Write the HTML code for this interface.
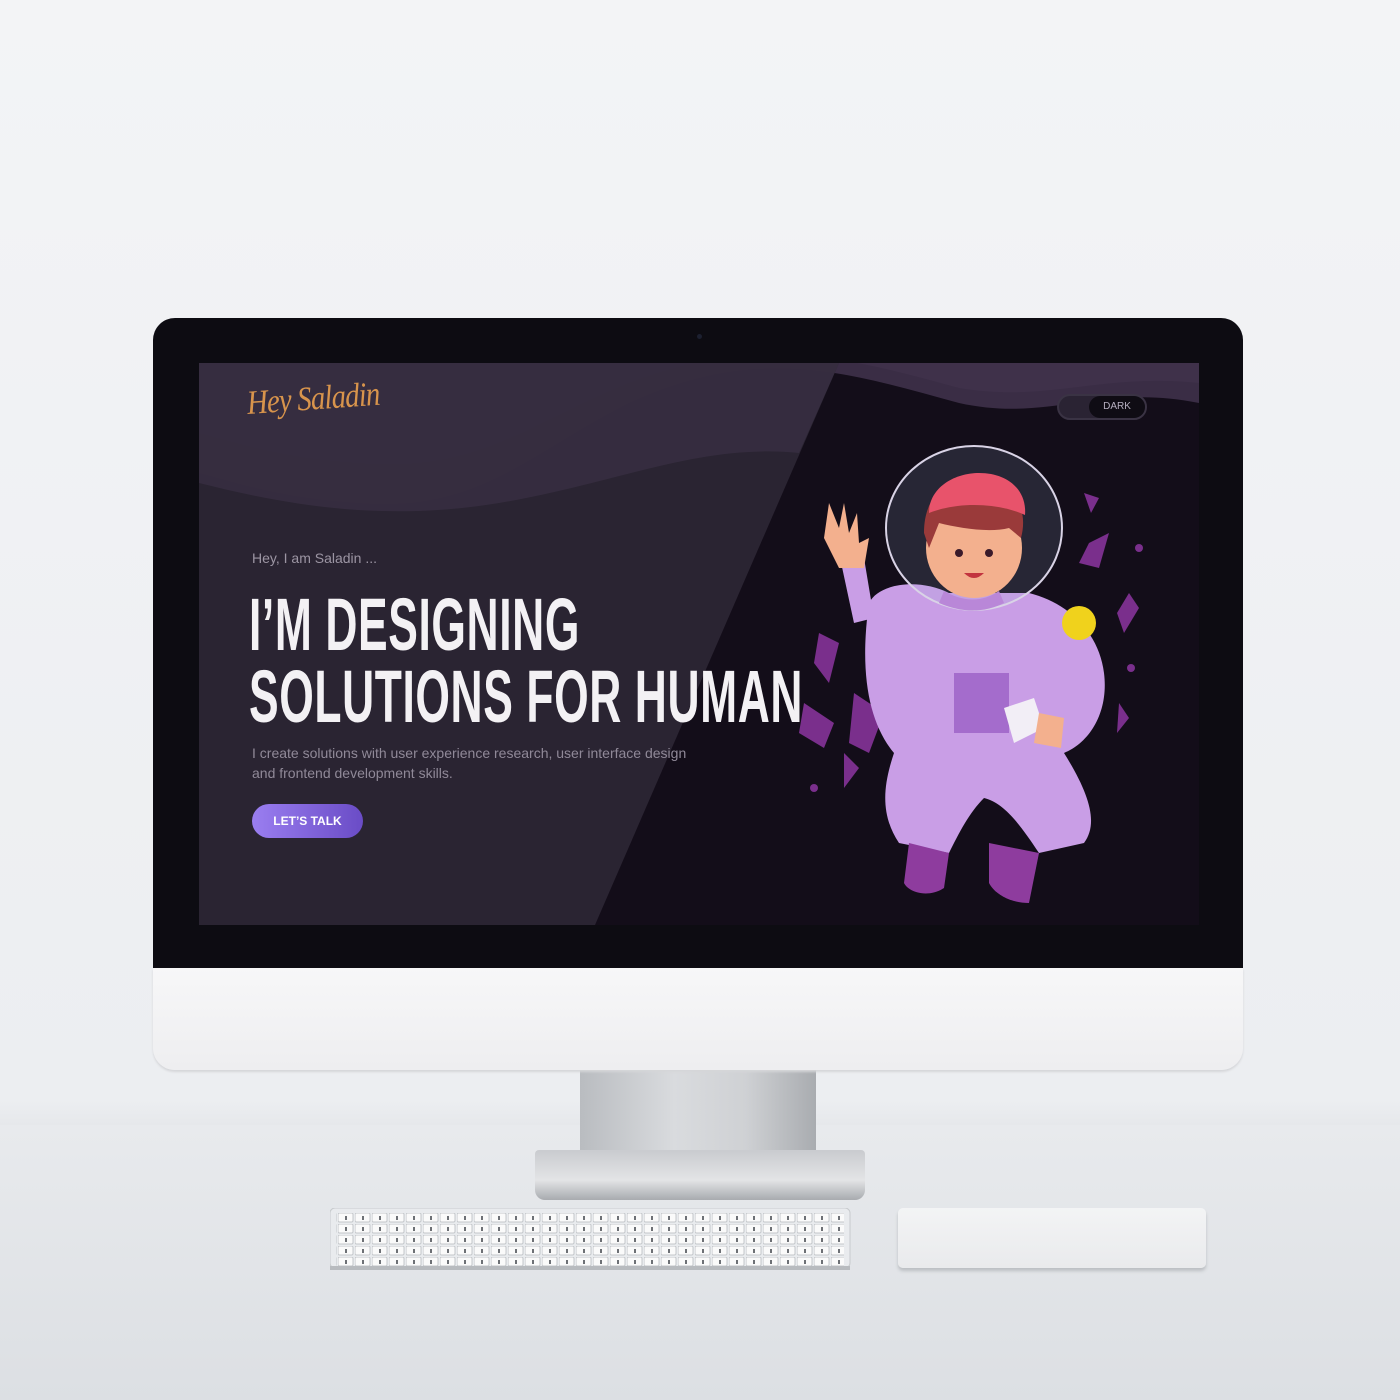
<!DOCTYPE html>
<html><head><meta charset="utf-8"><style>
*{margin:0;padding:0;box-sizing:border-box}
body{width:1400px;height:1400px;overflow:hidden;position:relative;background:linear-gradient(#f3f4f6 0,#eceef1 1100px,#e6e8eb 1125px,#dfe2e6 1400px);font-family:"Liberation Sans",sans-serif}
.abs{position:absolute}
</style></head><body>
<div class="abs" style="left:0;top:1125px;width:1400px;height:275px;background:linear-gradient(#e8eaed,#dcdfe3)"></div>
<div class="abs" style="left:580px;top:1066px;width:236px;height:110px;background:linear-gradient(90deg,#b9bcc0,#d9dbde 40%,#cfd1d4 70%,#a9acb0)"></div>
<div class="abs" style="left:535px;top:1150px;width:330px;height:50px;background:linear-gradient(#c9cbcf,#e3e4e6 60%,#a8abaf);border-radius:4px 4px 10px 10px"></div>
<div class="abs" style="left:153px;top:318px;width:1090px;height:652px;background:#0d0c12;border-radius:22px 22px 0 0"></div>
<div class="abs" style="left:697px;top:334px;width:5px;height:5px;border-radius:50%;background:#1c2030"></div>
<div class="abs" style="left:153px;top:968px;width:1090px;height:102px;background:linear-gradient(#f7f7f8,#eeeef0);border-radius:0 0 22px 22px;box-shadow:0 2px 2px #d5d6d9"></div>
<div class="abs" style="left:199px;top:363px;width:1000px;height:562px;background:#130d19;overflow:hidden">
 <svg class="abs" style="left:0;top:0" width="1000" height="562">
  <path d="M0 0H1000V40C900 20 850 60 760 40C650 10 560 -20 430 40C330 90 280 150 160 140C80 135 40 120 0 110Z" fill="#3a2d45"/>
  <path d="M0 0H1000V20C900 10 850 40 760 25C650 -5 560 -30 430 20C330 60 280 110 160 100C80 95 40 80 0 70Z" fill="#43354f" opacity=".5"/>
  <polygon points="0,0 640,0 396,562 0,562" fill="#2d2634" opacity=".92"/>
  <path d="M0 0H640L600 90C500 80 420 120 300 140C180 160 80 140 0 120Z" fill="#3b3044" opacity=".7"/>
 </svg>
 <div class="abs" style="left:48px;top:22px;color:#d8944c;font-family:'Liberation Serif',serif;font-style:italic;font-size:34px;letter-spacing:-1px;transform:rotate(-4deg) scaleX(.85);transform-origin:left">Hey Saladin</div>
 <div class="abs" style="left:858px;top:31px;width:90px;height:26px;border-radius:13px;background:#2a2333;border:2px solid #3a3344"></div>
 <div class="abs" style="left:890px;top:33px;width:56px;height:22px;border-radius:11px;background:#0f0c14;color:#b6afc0;font-size:10px;line-height:22px;text-align:center">DARK</div>
 <div class="abs" style="left:53px;top:187px;color:#9c95a3;font-size:14px">Hey, I am Saladin ...</div>
 <div class="abs" style="left:50px;top:226px;color:#f3f1f4;font-weight:bold;font-size:74px;line-height:72px;letter-spacing:1px;transform:scaleX(.6);transform-origin:left;white-space:nowrap">I’M DESIGNING<br>SOLUTIONS FOR HUMAN</div>
 <div class="abs" style="left:53px;top:380px;color:#908998;font-size:14px;line-height:20px">I create solutions with user experience research, user interface design<br>and frontend development skills.</div>
 <div class="abs" style="left:53px;top:441px;width:111px;height:34px;border-radius:17px;background:linear-gradient(90deg,#9a7ef0,#6a4cc6);color:#fff;font-size:12px;font-weight:bold;line-height:34px;text-align:center">LET’S TALK</div>
 <svg class="abs" style="left:600px;top:80px" width="360" height="480" viewBox="0 0 360 480">
  <g fill="#7a2f8c">
   <polygon points="285,50 300,55 292,70"/><polygon points="290,100 310,90 300,125 280,120"/><polygon points="330,150 340,165 325,190 318,170"/>
   <polygon points="20,190 40,200 30,240 15,220"/><polygon points="5,260 35,280 25,305 0,290"/><polygon points="45,310 60,325 45,345"/>
   <polygon points="320,260 330,275 318,290"/><polygon points="55,250 85,270 70,310 50,300"/>
   <circle cx="340" cy="105" r="4"/><circle cx="332" cy="225" r="4"/><circle cx="15" cy="345" r="4"/>
  </g>
  <path d="M70 160C80 140 120 135 150 150L230 150C270 160 300 190 305 230C310 270 290 300 265 310C290 350 300 380 285 400L240 410C220 380 205 360 185 355C170 370 160 390 150 410L100 400C80 370 85 340 95 310C70 280 60 230 70 160Z" fill="#c99ee6"/>
  <path d="M40 110L65 115L75 175L55 180Z" fill="#c99ee6"/>
  <path d="M155 230H210V290H155Z" fill="#a46ccc"/>
  <path d="M110 400L150 410L145 445C130 455 110 450 105 440Z" fill="#8e3c9e"/>
  <path d="M190 400L240 410L230 460C210 460 195 450 190 440Z" fill="#8e3c9e"/>
  <path d="M30 60L40 85L45 60L50 90L58 70L60 100L70 95L65 125L40 125L25 95Z" fill="#f3b08e"/>
  <path d="M205 265L235 255L245 285L215 300Z" fill="#f2eef6"/>
  <path d="M240 270L265 275L262 305L235 300Z" fill="#f3b08e"/>
  <circle cx="280" cy="180" r="17" fill="#f0d21c"/>
  <ellipse cx="175" cy="85" rx="88" ry="82" fill="#9bb3d8" fill-opacity=".15" stroke="#d9d3e6" stroke-width="2"/>
  <ellipse cx="175" cy="105" rx="48" ry="50" fill="#f3b08e"/>
  <path d="M125 90C125 50 150 35 180 38C215 40 230 65 222 95L210 85C190 90 160 85 140 80L130 105Z" fill="#9a3a3a"/>
  <path d="M130 70C130 45 155 30 180 30C210 30 228 48 226 72C200 60 160 58 130 70Z" fill="#e8536b"/>
  <path d="M145 148Q175 165 200 148L205 160Q175 175 140 160Z" fill="#b987d8"/>
  <circle cx="160" cy="110" r="4" fill="#3a1a2a"/><circle cx="190" cy="110" r="4" fill="#3a1a2a"/>
  <path d="M165 130Q175 140 185 130Z" fill="#c2343f"/>
 </svg>
</div>
<!-- keyboard -->
<svg class="abs" style="left:330px;top:1208px" width="522" height="64">
 <defs><pattern id="k" x="8" y="5" width="17" height="11" patternUnits="userSpaceOnUse"><rect x="0" y="0" width="15" height="9" rx="1.5" fill="#fafafa" stroke="#c4c7cb" stroke-width="1"/><rect x="7" y="3" width="2" height="4" fill="#6d7075"/></pattern></defs>
 <rect x="0" y="0" width="520" height="60" rx="5" fill="#e9ebee" stroke="#c7cacd"/>
 <rect x="6" y="4" width="508" height="54" fill="url(#k)"/>
 <rect x="0" y="58" width="520" height="4" fill="#b8bbbf"/>
</svg>
<div class="abs" style="left:898px;top:1208px;width:308px;height:60px;background:linear-gradient(#f3f4f5,#e9eaec);border-radius:5px;box-shadow:0 3px 3px #bcbfc3"></div>
</body></html>
